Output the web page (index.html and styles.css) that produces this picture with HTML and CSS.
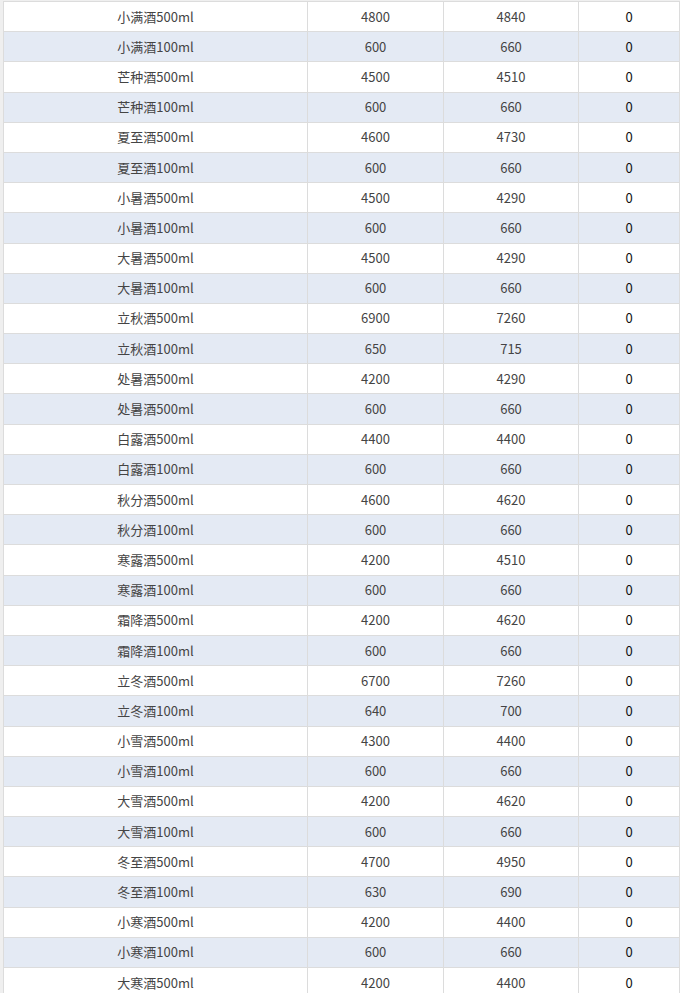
FILE: index.html
```html
<!DOCTYPE html>
<html lang="zh">
<head>
<meta charset="utf-8">
<title>价格表</title>
<link rel="stylesheet" href="styles.css">
</head>
<body>
<div class="wrap">
<table class="price">
<colgroup><col class="c1"><col class="c2"><col class="c3"><col class="c4"></colgroup>
<tbody>
<tr><td>小满酒500ml</td><td>4800</td><td>4840</td><td class="z">0</td></tr>
<tr><td>小满酒100ml</td><td>600</td><td>660</td><td class="z">0</td></tr>
<tr><td>芒种酒500ml</td><td>4500</td><td>4510</td><td class="z">0</td></tr>
<tr><td>芒种酒100ml</td><td>600</td><td>660</td><td class="z">0</td></tr>
<tr><td>夏至酒500ml</td><td>4600</td><td>4730</td><td class="z">0</td></tr>
<tr><td>夏至酒100ml</td><td>600</td><td>660</td><td class="z">0</td></tr>
<tr><td>小暑酒500ml</td><td>4500</td><td>4290</td><td class="z">0</td></tr>
<tr><td>小暑酒100ml</td><td>600</td><td>660</td><td class="z">0</td></tr>
<tr><td>大暑酒500ml</td><td>4500</td><td>4290</td><td class="z">0</td></tr>
<tr><td>大暑酒100ml</td><td>600</td><td>660</td><td class="z">0</td></tr>
<tr><td>立秋酒500ml</td><td>6900</td><td>7260</td><td class="z">0</td></tr>
<tr><td>立秋酒100ml</td><td>650</td><td>715</td><td class="z">0</td></tr>
<tr><td>处暑酒500ml</td><td>4200</td><td>4290</td><td class="z">0</td></tr>
<tr><td>处暑酒500ml</td><td>600</td><td>660</td><td class="z">0</td></tr>
<tr><td>白露酒500ml</td><td>4400</td><td>4400</td><td class="z">0</td></tr>
<tr><td>白露酒100ml</td><td>600</td><td>660</td><td class="z">0</td></tr>
<tr><td>秋分酒500ml</td><td>4600</td><td>4620</td><td class="z">0</td></tr>
<tr><td>秋分酒100ml</td><td>600</td><td>660</td><td class="z">0</td></tr>
<tr><td>寒露酒500ml</td><td>4200</td><td>4510</td><td class="z">0</td></tr>
<tr><td>寒露酒100ml</td><td>600</td><td>660</td><td class="z">0</td></tr>
<tr><td>霜降酒500ml</td><td>4200</td><td>4620</td><td class="z">0</td></tr>
<tr><td>霜降酒100ml</td><td>600</td><td>660</td><td class="z">0</td></tr>
<tr><td>立冬酒500ml</td><td>6700</td><td>7260</td><td class="z">0</td></tr>
<tr><td>立冬酒100ml</td><td>640</td><td>700</td><td class="z">0</td></tr>
<tr><td>小雪酒500ml</td><td>4300</td><td>4400</td><td class="z">0</td></tr>
<tr><td>小雪酒100ml</td><td>600</td><td>660</td><td class="z">0</td></tr>
<tr><td>大雪酒500ml</td><td>4200</td><td>4620</td><td class="z">0</td></tr>
<tr><td>大雪酒100ml</td><td>600</td><td>660</td><td class="z">0</td></tr>
<tr><td>冬至酒500ml</td><td>4700</td><td>4950</td><td class="z">0</td></tr>
<tr><td>冬至酒100ml</td><td>630</td><td>690</td><td class="z">0</td></tr>
<tr><td>小寒酒500ml</td><td>4200</td><td>4400</td><td class="z">0</td></tr>
<tr><td>小寒酒100ml</td><td>600</td><td>660</td><td class="z">0</td></tr>
<tr><td>大寒酒500ml</td><td>4200</td><td>4400</td><td class="z">0</td></tr>
<tr><td>大寒酒100ml</td><td>600</td><td>660</td><td class="z">0</td></tr>
</tbody>
</table>
</div>
</body>
</html>
```
FILE: styles.css
```css
html, body {
  margin: 0;
  padding: 0;
  background: #efefef;
}
.wrap {
  padding: 1px 0 0 3px;
}
.price {
  border-collapse: collapse;
  table-layout: fixed;
  width: 676px;
  font-family: "Noto Sans CJK SC", "Noto Sans", sans-serif;
  font-size: 13px;
  color: #444;
}
.c1 { width: 304px; }
.c2 { width: 136px; }
.c3 { width: 135px; }
.c4 { width: 101px; }
.price td {
  border: 1px solid #dcdcdc;
  height: 29.2px;
  padding: 0;
  text-align: center;
  vertical-align: middle;
  background: #fff;
  line-height: 16px;
}
.price tr:nth-child(even) td {
  background: #e4eaf4;
}
.price td.z {
  color: #111;
}
```
